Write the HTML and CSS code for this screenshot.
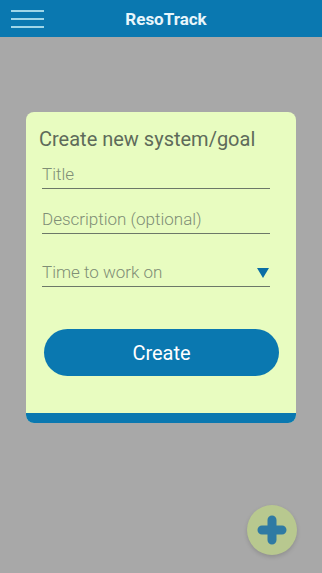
FILE: index.html
```html
<!DOCTYPE html>
<html>
<head>
<meta charset="utf-8">
<link rel="stylesheet" href="styles.css">
</head>
<body>
<div class="app">
  <header class="topbar">
    <div class="menu"><span></span><span></span><span></span></div>
    <div class="brand">ResoTrack</div>
  </header>
  <main class="overlay">
    <div class="card">
      <div class="card-body">
        <h2 class="card-title">Create new system/goal</h2>
        <div class="field"><span class="ph">Title</span></div>
        <div class="field"><span class="ph">Description (optional)</span></div>
        <div class="field select"><span class="ph">Time to work on</span><span class="arrow"></span></div>
        <button class="btn">Create</button>
      </div>
      <div class="card-foot"></div>
    </div>
  </main>
  <div class="fab"><svg width="30" height="30" viewBox="0 0 30 30"><path d="M15 5 V25 M5 15 H25" stroke="#2f7aa3" stroke-width="9" stroke-linecap="round" fill="none"/></svg></div>
</div>
</body>
</html>
```
FILE: styles.css
```css
html, body { margin: 0; padding: 0; }
body { font-family: Roboto, "Noto Sans", sans-serif; background: #a8a8a8; }
.app { width: 322px; height: 573px; position: relative; overflow: hidden; background: #a8a8a8; display: flex; flex-direction: column; }
.topbar { height: 37px; background: #0a78b0; display: flex; align-items: center; position: relative; flex: none; }
.menu { width: 33px; margin-left: 11px; display: flex; flex-direction: column; gap: 6px; }
.menu span { display: block; height: 2px; background: #9fd6e8; }
.brand { position: absolute; left: 0; right: 0; top: 0; bottom: 0; display: flex; align-items: center; justify-content: center; color: #e8f6fb; font-weight: bold; font-size: 17px; padding-left: 10px; pointer-events: none; }
.overlay { flex: 1; padding: 75px 26px 0 26px; }
.card { width: 270px; height: 311px; background: #e8fcc0; border-radius: 8px; overflow: hidden; display: flex; flex-direction: column; }
.card-body { flex: 1; padding: 14px 26px 0 13px; }
.card-title { margin: 0 0 9px; font-weight: normal; font-size: 20px; color: #5e6b5a; line-height: 26px; }
.field { margin-left: 3px; height: 27px; border-bottom: 1px solid #6c7868; display: flex; align-items: flex-end; justify-content: space-between; margin-bottom: 17px; }
.field .ph { font-size: 17px; font-weight: 300; color: #7f8e76; line-height: 22px; padding-bottom: 3px; }
.field.select { margin-top: 25px; }
.arrow { width: 0; height: 0; border-left: 6px solid transparent; border-right: 6px solid transparent; border-top: 10px solid #0a6ea5; margin-bottom: 8px; margin-right: 1px; }
.btn { display: block; margin: 42px 0 0 5px; width: 235px; height: 47px; border: none; border-radius: 24px; background: #0a78b0; color: #ffffff; font-family: Roboto, sans-serif; font-size: 20px; }
.card-foot { height: 10px; background: #0a78b0; flex: none; }
.fab { position: absolute; left: 247px; top: 505px; width: 50px; height: 50px; border-radius: 50%; background: #b8c88f; display: flex; align-items: center; justify-content: center; box-shadow: 0 2px 4px rgba(0,0,0,0.15); }
```
